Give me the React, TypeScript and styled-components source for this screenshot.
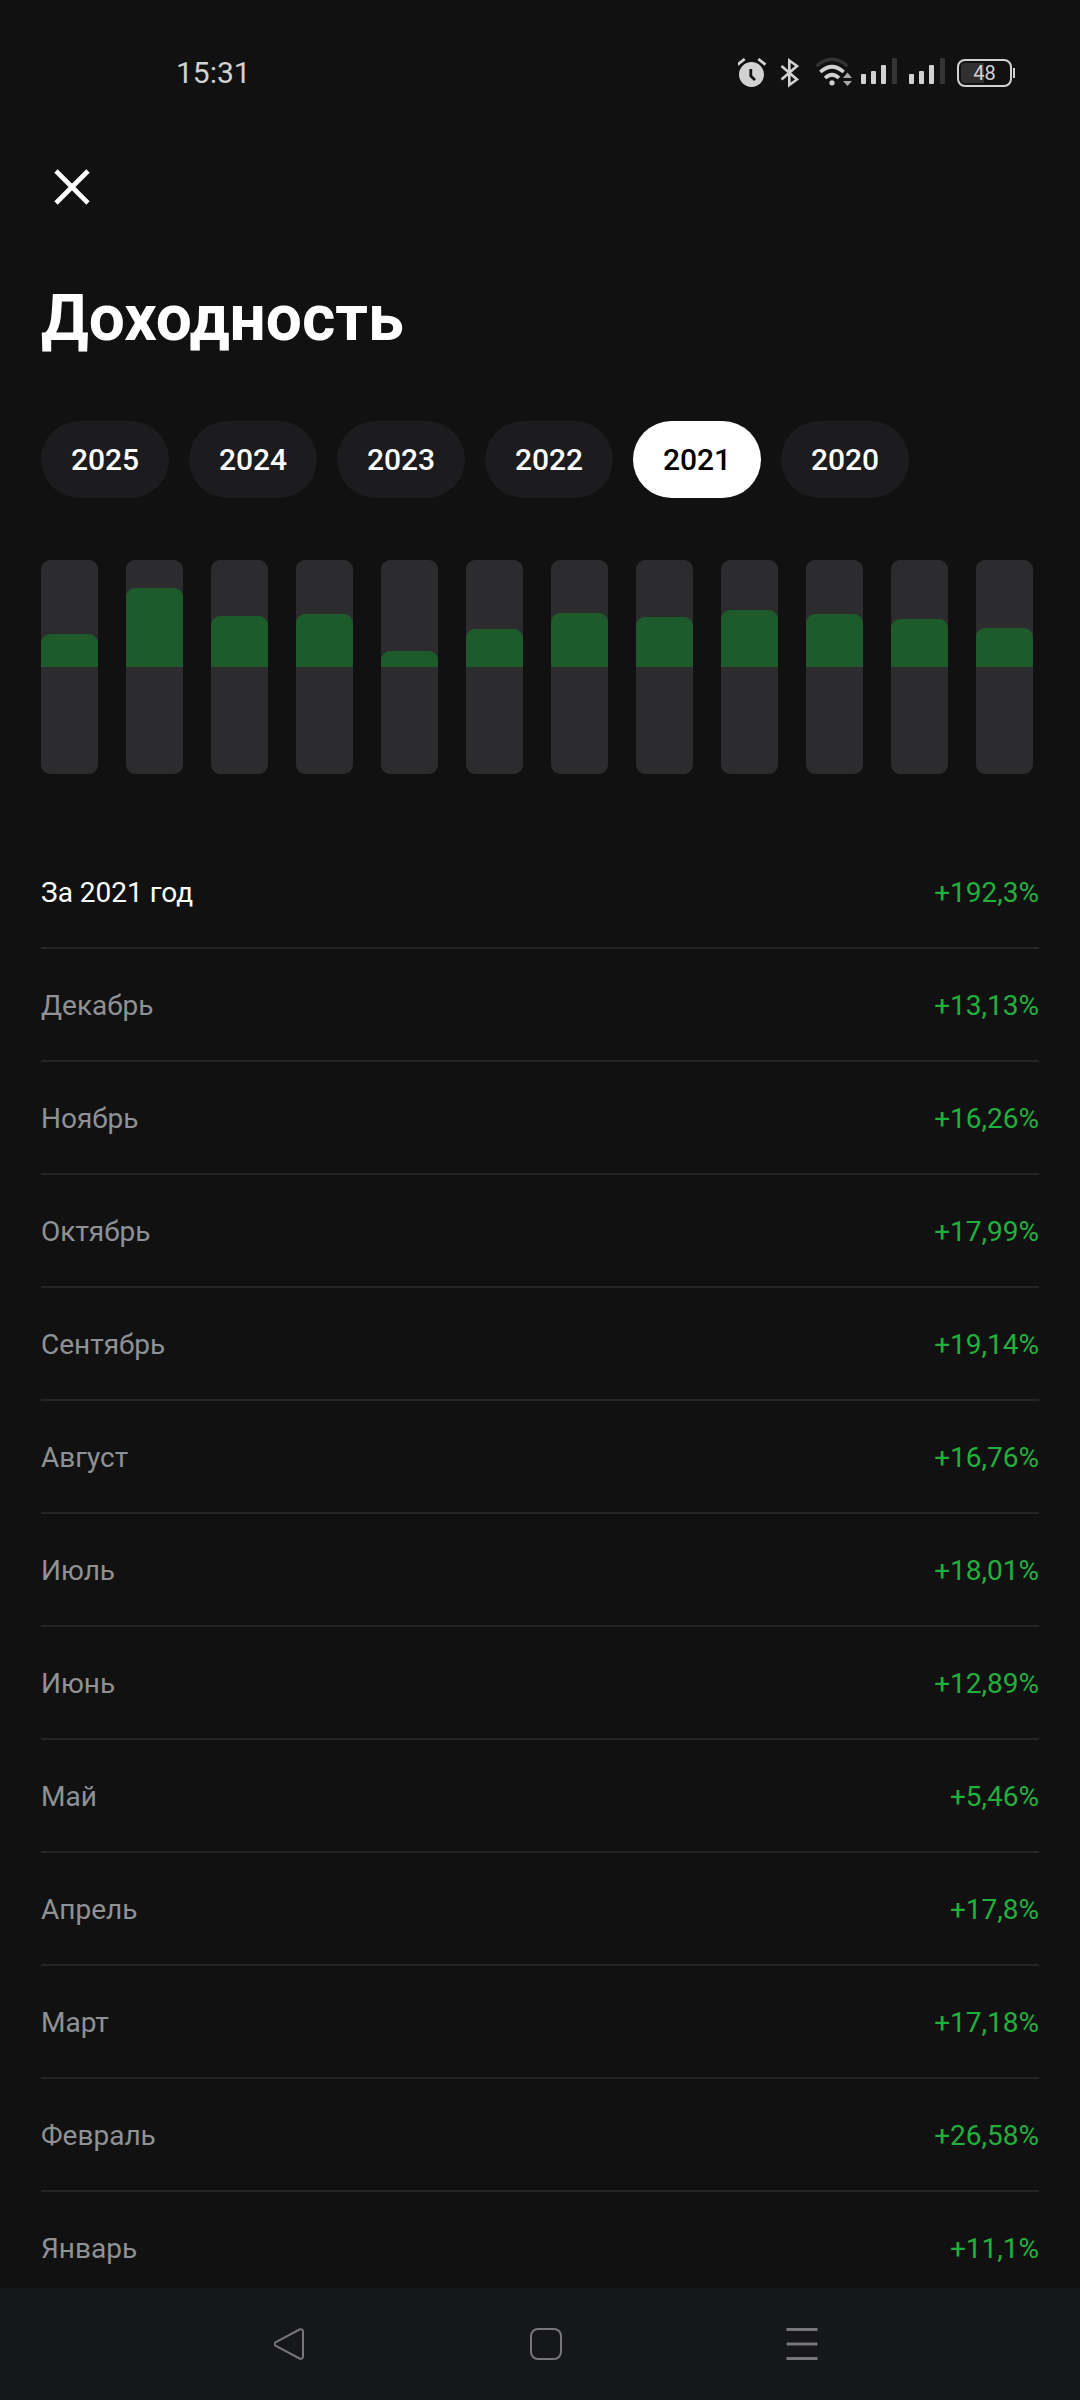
import React, { useState } from 'react';
import styled, { createGlobalStyle } from 'styled-components';

const GlobalStyle = createGlobalStyle`
  *, *::before, *::after { box-sizing: border-box; }
  body {
    margin: 0;
    background: #111111;
    color: #ffffff;
    font-family: Roboto, "Noto Sans", sans-serif;
  }
  button { font-family: inherit; border: 0; padding: 0; background: none; cursor: pointer; }
`;

const Screen = styled.div`
  display: flex;
  flex-direction: column;
  height: 100vh;
`;

const StatusBar = styled.div`
  flex: none;
  display: flex;
  align-items: center;
  justify-content: space-between;
  height: 146px;
  padding: 0 65px 0 176px;
  color: #d2d2d2;
`;

const Clock = styled.time`
  font-size: 30px;
  line-height: 40px;
`;

const StatusIcons = styled.div`
  display: flex;
  align-items: center;
  gap: 8px;
`;

const StatusSvg = styled.svg`
  display: block;
  flex: none;
`;

const Battery = styled.div`
  display: flex;
  align-items: center;
  gap: 1px;
`;

const BatteryBody = styled.div`
  display: grid;
  place-items: center;
  width: 55px;
  height: 28px;
  border: 2px solid #d2d2d2;
  border-radius: 8px;
  font-size: 20px;
  line-height: 20px;
  background: linear-gradient(to right, #303030 48%, transparent 48%) content-box;
  padding: 2px;
`;

const BatteryTip = styled.div`
  width: 2px;
  height: 10px;
  background: #d2d2d2;
`;

const Content = styled.main`
  flex: 1;
  min-height: 0;
  overflow-y: auto;
  scrollbar-width: none;
  padding: 0 41px;
`;

const CloseButton = styled.button`
  display: grid;
  place-items: center;
  width: 61px;
  height: 81px;
  color: #ffffff;
`;

const Title = styled.h1`
  margin: 54px 0 0;
  font-size: 64px;
  line-height: 76px;
  font-weight: 700;
`;

const YearTabs = styled.div`
  display: flex;
  gap: 20px;
  margin-top: 64px;
`;

const YearTab = styled.button<{ $active: boolean }>`
  width: 128px;
  height: 77px;
  border-radius: 40px;
  font-size: 30px;
  line-height: 40px;
  font-weight: 500;
  color: ${({ $active }) => ($active ? '#000000' : '#ffffff')};
  background: ${({ $active }) => ($active ? '#ffffff' : '#1c1c1e')};
`;

const Chart = styled.div`
  display: grid;
  grid-template-columns: repeat(12, 1fr);
  gap: 28px;
  margin-top: 62px;
  padding-right: 6px;
`;

const Track = styled.div`
  height: 214px;
  border-radius: 9px;
  background: #2c2c2e;
`;

const UpperHalf = styled.div`
  display: flex;
  align-items: flex-end;
  height: 50%;
`;

const Fill = styled.div`
  width: 100%;
  border-radius: 9px 9px 0 0;
  background: #1e5b2c;
`;

const Returns = styled.table`
  width: 100%;
  margin-top: 62px;
  border-spacing: 0;
  font-size: 28px;
  line-height: 36px;
`;

const Period = styled.th<{ $total?: boolean }>`
  height: 113px;
  padding: 2px 0 0;
  border-bottom: 2px solid #252526;
  text-align: left;
  font-weight: 400;
  color: ${({ $total }) => ($total ? '#ffffff' : '#8f9195')};
`;

const Value = styled.td`
  height: 113px;
  padding: 2px 0 0;
  border-bottom: 2px solid #252526;
  text-align: right;
  color: #21b03c;
`;

const NavBar = styled.nav`
  flex: none;
  display: flex;
  align-items: center;
  justify-content: center;
  gap: 160px;
  height: 112px;
  padding-left: 12px;
  background: #16171b;
`;

const NavButton = styled.button`
  display: grid;
  place-items: center;
  width: 96px;
  height: 96px;
  color: #77777a;
`;

const YEARS = [2025, 2024, 2023, 2022, 2021, 2020];

const MONTHS = [
  { name: 'Январь', value: 11.1 },
  { name: 'Февраль', value: 26.58 },
  { name: 'Март', value: 17.18 },
  { name: 'Апрель', value: 17.8 },
  { name: 'Май', value: 5.46 },
  { name: 'Июнь', value: 12.89 },
  { name: 'Июль', value: 18.01 },
  { name: 'Август', value: 16.76 },
  { name: 'Сентябрь', value: 19.14 },
  { name: 'Октябрь', value: 17.99 },
  { name: 'Ноябрь', value: 16.26 },
  { name: 'Декабрь', value: 13.13 },
];

const CHART_MAX = 36;

const percent = (value: number) => `+${String(value).replace('.', ',')}%`;

const AlarmIcon = () => (
  <StatusSvg width="34" height="30" viewBox="0 0 34 30" fill="none">
    <circle cx="13.5" cy="16.5" r="12.5" fill="#d2d2d2" />
    <path d="M-.5 6.700 6.700 1M27.500 6.700 20.300 1" stroke="#d2d2d2" strokeWidth="2.800" />
    <path d="M12.800 11v7l4.200 4" stroke="#111111" strokeWidth="2.800" />
  </StatusSvg>
);

const BluetoothIcon = () => (
  <StatusSvg width="27" height="30" viewBox="0 0 27 30" fill="none">
    <path d="M1.500 8 17 21.500 9.300 27V2.500L17 8 1.500 21.500" stroke="#d2d2d2" strokeWidth="2.600" />
  </StatusSvg>
);

const WifiIcon = () => (
  <StatusSvg width="38" height="32" viewBox="0 0 38 32" fill="none">
    <path d="M1.500 9Q17 -4.500 32.500 9" stroke="#333333" strokeWidth="3.600" />
    <path d="M5.300 15Q17 4.500 28.700 15" stroke="#d2d2d2" strokeWidth="3.600" />
    <path d="M10 21Q17 14.500 24 21" stroke="#d2d2d2" strokeWidth="3.600" />
    <circle cx="17" cy="25.800" r="2.600" fill="#d2d2d2" />
    <path d="M28 21h9l-4.500-5.500zM28 24h9l-4.500 5z" fill="#a8a8a8" />
  </StatusSvg>
);

const SignalIcon = () => (
  <StatusSvg width="40" height="30" viewBox="0 0 40 30">
    <rect x="0" y="16" width="5" height="10" rx="1" fill="#d2d2d2" />
    <rect x="10" y="13" width="5" height="13" rx="1" fill="#d2d2d2" />
    <rect x="20" y="7" width="5" height="19" rx="1" fill="#d2d2d2" />
    <rect x="31" y="0" width="5" height="26" rx="1" fill="#343434" />
  </StatusSvg>
);

export default function App() {
  const [year, setYear] = useState(2021);

  return (
    <>
      <GlobalStyle />
      <Screen>
        <StatusBar>
          <Clock>15:31</Clock>
          <StatusIcons>
            <AlarmIcon />
            <BluetoothIcon />
            <WifiIcon />
            <SignalIcon />
            <SignalIcon />
            <Battery>
              <BatteryBody>48</BatteryBody>
              <BatteryTip />
            </Battery>
          </StatusIcons>
        </StatusBar>

        <Content>
          <CloseButton type="button" aria-label="Закрыть">
            <svg width="36" height="36" viewBox="0 0 36 36" fill="none" stroke="currentColor" strokeWidth="4.600">
              <path d="M2 2 34 34M34 2 2 34" />
            </svg>
          </CloseButton>
          <Title>Доходность</Title>

          <YearTabs>
            {YEARS.map((y) => (
              <YearTab key={y} type="button" $active={y === year} aria-pressed={y === year} onClick={() => setYear(y)}>
                {y}
              </YearTab>
            ))}
          </YearTabs>

          <Chart role="img" aria-label="Доходность по месяцам">
            {MONTHS.map((m) => (
              <Track key={m.name}>
                <UpperHalf>
                  <Fill style={{ height: `${(m.value / CHART_MAX) * 100}%` }} />
                </UpperHalf>
              </Track>
            ))}
          </Chart>

          <Returns>
            <tbody>
              <tr>
                <Period scope="row" $total>За 2021 год</Period>
                <Value>+192,3%</Value>
              </tr>
              {[...MONTHS].reverse().map((m) => (
                <tr key={m.name}>
                  <Period scope="row">{m.name}</Period>
                  <Value>{percent(m.value)}</Value>
                </tr>
              ))}
            </tbody>
          </Returns>
        </Content>

        <NavBar>
          <NavButton type="button" aria-label="Назад">
            <svg width="32" height="32" viewBox="0 0 32 32" fill="none" stroke="currentColor" strokeWidth="2" strokeLinejoin="round">
              <path d="M1.500 14.300 25.500 1.500Q29 .5 29 4V28Q29 31.500 25.500 30.500L1.500 17.700Q-.5 16 1.500 14.300Z" />
            </svg>
          </NavButton>
          <NavButton type="button" aria-label="Домой">
            <svg width="32" height="32" viewBox="0 0 32 32" fill="none" stroke="currentColor" strokeWidth="2">
              <rect x="1" y="1" width="30" height="30" rx="7" />
            </svg>
          </NavButton>
          <NavButton type="button" aria-label="Недавние приложения">
            <svg width="32" height="32" viewBox="0 0 32 32" fill="none" stroke="currentColor" strokeWidth="3">
              <path d="M.5 1.500h31M.5 16h31M.5 30.500h31" />
            </svg>
          </NavButton>
        </NavBar>
      </Screen>
    </>
  );
}
